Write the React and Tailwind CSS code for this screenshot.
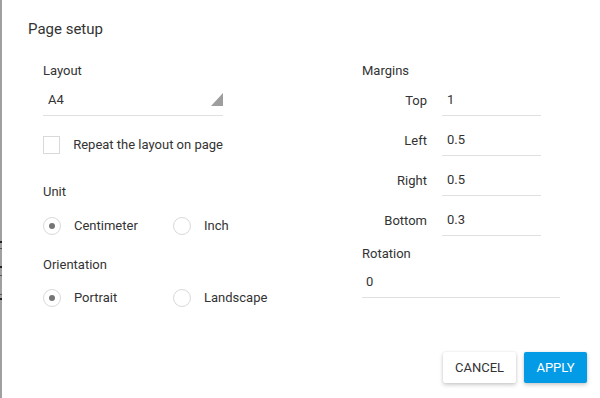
import { useState } from 'react'

const font = { fontFamily: 'Roboto, "Noto Sans", Arial, sans-serif' }

function Radio({ checked, label, onClick }) {
  return (
    <button type="button" onClick={onClick} className="flex h-[18px] shrink-0 items-center whitespace-nowrap text-left">
      <span className="flex h-[18px] w-[18px] shrink-0 items-center justify-center rounded-full border border-[#d9d9d9] bg-white">
        {checked && <span className="h-[6px] w-[6px] rounded-full bg-[#757575]" />}
      </span>
      <span className="ml-[13px] text-[13px] leading-[18px] text-[#333]">{label}</span>
    </button>
  )
}

function MarginRow({ label, value, first }) {
  return (
    <div className={`flex items-center ${first ? 'mt-[4px]' : 'mt-[9px]'}`}>
      <span className="w-[65px] text-right text-[13px] text-[#333]">{label}</span>
      <div className="ml-[15px] flex h-[31px] w-[99px] items-center border-b border-[#e0e0e0] pl-[5px] text-[13px] text-[#333]">
        {value}
      </div>
    </div>
  )
}

export default function App() {
  const [repeat, setRepeat] = useState(false)
  const [unit, setUnit] = useState('cm')
  const [orient, setOrient] = useState('portrait')

  return (
    <div className="flex h-[398px] w-[600px] overflow-hidden bg-[#a0a0a0]" style={font}>
      {/* bits of the sheet behind the overlay */}
      <div className="flex w-[2px] flex-col">
        <div className="h-[241px]" />
        <div className="h-[2px] bg-[#222]" />
        <div className="h-[5px]" />
        <div className="h-px bg-[#555]" />
        <div className="h-[17px]" />
        <div className="h-[2px] bg-[#222]" />
        <div className="h-[7px]" />
        <div className="h-px bg-[#555]" />
        <div className="h-[18px]" />
        <div className="h-px bg-[#555]" />
        <div className="h-[3px]" />
        <div className="h-[2px] bg-[#222]" />
      </div>

      <div className="flex flex-1 flex-col bg-white">
        <h1 className="pl-[26px] pt-[19px] text-[15px] leading-[20px] text-[#333]">Page setup</h1>

        <div className="flex pt-[22px]">
          {/* left column */}
          <div className="ml-[41px] flex w-[180px] shrink-0 flex-col">
            <p className="text-[13px] leading-[20px] text-[#333]">Layout</p>
            <div className="mt-[4px] flex h-[31px] items-center justify-between border-b border-[#e0e0e0] pl-[5px] text-[13px] text-[#333]">
              <span>A4</span>
              <svg width="12" height="13" viewBox="0 0 12 13" className="mb-[2px]">
                <polygon points="12,0 12,13 0,13" fill="#9e9e9e" />
              </svg>
            </div>

            <button
              type="button"
              onClick={() => setRepeat(!repeat)}
              className="mt-[20px] flex h-[18px] items-center text-left"
            >
              <span className="flex h-[18px] w-[18px] items-center justify-center border border-[#d9d9d9] bg-white text-[12px] leading-none text-[#757575]">
                {repeat ? '✓' : ''}
              </span>
              <span className="ml-[13px] whitespace-nowrap text-[13px] leading-[18px] text-[#333]">
                Repeat the layout on page
              </span>
            </button>

            <p className="mt-[28px] text-[13px] leading-[20px] text-[#333]">Unit</p>
            <div className="mt-[15px] flex w-max">
              <div className="w-[130px] shrink-0">
                <Radio checked={unit === 'cm'} label="Centimeter" onClick={() => setUnit('cm')} />
              </div>
              <Radio checked={unit === 'in'} label="Inch" onClick={() => setUnit('in')} />
            </div>

            <p className="mt-[20px] text-[13px] leading-[20px] text-[#333]">Orientation</p>
            <div className="mt-[14px] flex w-max">
              <div className="w-[130px] shrink-0">
                <Radio
                  checked={orient === 'portrait'}
                  label="Portrait"
                  onClick={() => setOrient('portrait')}
                />
              </div>
              <Radio
                checked={orient === 'landscape'}
                label="Landscape"
                onClick={() => setOrient('landscape')}
              />
            </div>
          </div>

          {/* right column */}
          <div className="ml-[139px] flex w-[198px] shrink-0 flex-col">
            <p className="text-[13px] leading-[20px] text-[#333]">Margins</p>
            <MarginRow label="Top" value="1" first />
            <MarginRow label="Left" value="0.5" />
            <MarginRow label="Right" value="0.5" />
            <MarginRow label="Bottom" value="0.3" />

            <p className="mt-[8px] text-[13px] leading-[20px] text-[#333]">Rotation</p>
            <div className="mt-[3px] flex h-[31px] items-center border-b border-[#e0e0e0] pl-[4px] text-[13px] text-[#333]">
              0
            </div>
          </div>
        </div>

        <div className="flex-1" />

        <div className="flex justify-end gap-[8px] pb-[15px] pr-[13px]">
          <button
            type="button"
            className="h-[31px] w-[73px] rounded-[2px] bg-white text-[13px] text-[#333] shadow-[0_2px_4px_rgba(0,0,0,0.2),0_0_2px_rgba(0,0,0,0.1)]"
          >
            CANCEL
          </button>
          <button
            type="button"
            className="h-[31px] w-[63px] rounded-[2px] bg-[#039be5] text-[13px] text-white shadow-[0_2px_4px_rgba(0,0,0,0.2),0_0_2px_rgba(0,0,0,0.1)]"
          >
            APPLY
          </button>
        </div>
      </div>
    </div>
  )
}
